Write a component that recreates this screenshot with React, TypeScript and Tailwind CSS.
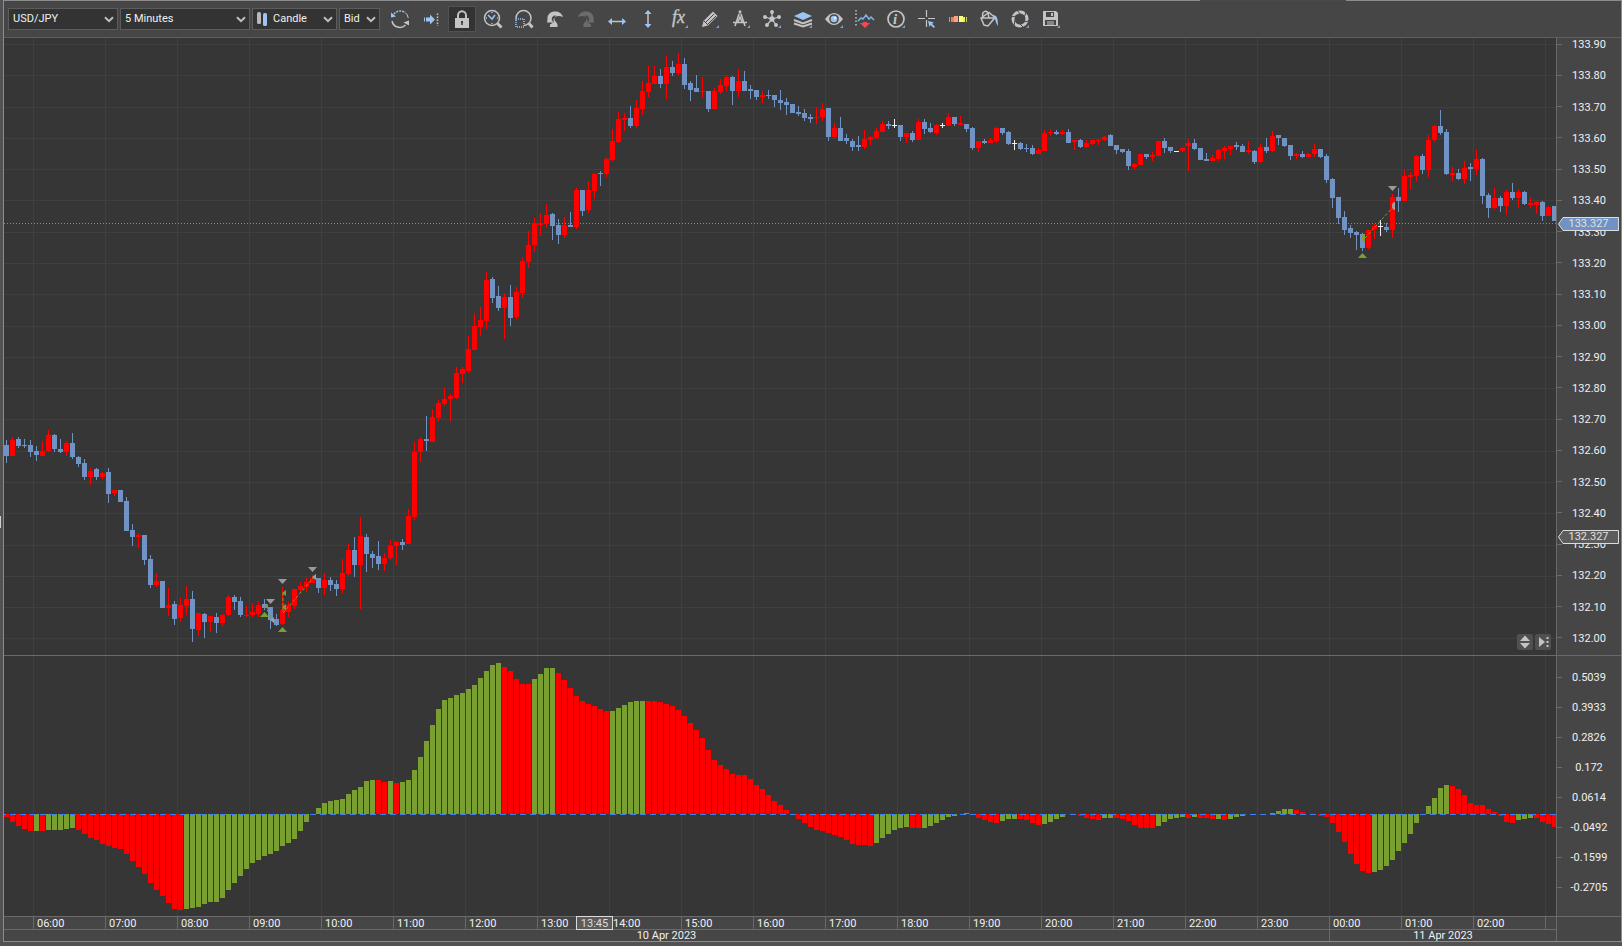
import { ReactNode } from "react";

// Plot geometry: one candle every 6 units, one grid column per hour
const PLOT = { left: 4, width: 1552, top: 38, height: 617 };
const OSC = { top: 656, height: 260, zero: 814 };
const STEP = 6;

const COLORS: Record<string, string> = {
  r: "#ff0000",
  b: "#7093c3",
  w: "#f0f0f0",
  g: "#7a9f31",
};

// colour + high/bodyTop/bodyBottom/low
const CANDLES = `
b440/445/456/463 r437/440/456/456 b437/439/446/448 b439/445/446/448 b440/445/452/457 b446/451/455/461
r441/451/456/456 r430/435/451/452 b434/435/449/452 b439/449/452/453 r441/443/452/456 b433/443/457/459
b456/457/464/467 b459/463/477/480 r468/471/477/485 b468/469/477/480 r472/473/477/479 b468/472/494/503
r490/490/493/496 b490/490/502/502 b497/501/531/531 b524/530/537/546 r533/535/537/548 b535/535/560/565
b555/559/585/588 r573/581/585/587 b581/581/608/608 r588/605/608/616 b601/604/619/625 r598/605/618/622
r586/599/606/615 b591/599/629/642 r613/613/630/636 b613/614/622/638 r616/616/622/632 b613/617/623/633
r614/615/623/626 r595/597/615/616 b595/597/602/610 b597/601/615/617 r606/615/616/617 r603/612/615/617
r601/605/614/617 b599/604/608/610 b607/607/620/629 b614/619/625/626 r587/610/624/625 r602/605/612/617
r589/589/606/609 r582/586/590/593 r578/582/587/592 r575/578/583/583 b578/578/588/593 r573/580/588/595
b577/580/585/591 b580/584/589/596 r559/573/589/593 r544/550/574/576 b537/550/565/577 r517/536/565/609
b534/537/554/572 b551/554/558/568 b541/556/564/570 r553/558/564/571 r540/546/558/560 r541/542/546/565
b539/542/545/550 r509/516/544/544 r442/452/517/520 r437/439/452/462 b416/439/441/451 r409/417/442/442
r400/403/418/422 r388/399/404/406 r394/396/399/422 r367/373/398/399 r367/369/374/383 r336/349/371/373
r313/326/350/350 r307/320/327/336 r272/280/321/329 b277/279/298/303 b286/296/308/311 r294/297/308/339
b285/297/318/326 r287/292/317/319 r257/261/293/298 r231/245/262/268 r218/223/245/252 r213/223/225/236
r204/215/224/228 b213/214/226/240 b219/225/235/244 r217/225/235/238 b212/225/227/227 r188/190/227/229
b190/190/211/216 r181/190/210/213 r173/174/191/199 b171/173/174/186 r157/159/174/177 r129/141/160/161
r112/119/142/143 r113/118/120/131 b106/118/126/128 r100/108/126/128 r81/91/109/115 r66/83/92/97
r66/76/84/84 b69/76/84/88 r56/67/84/99 b61/67/73/76 r53/64/73/75 b58/64/85/89
b81/83/90/101 b75/88/92/92 r77/91/92/98 b91/91/109/112 r88/91/109/109 r79/85/92/94
r75/77/86/91 b76/77/91/105 r69/81/91/97 b71/81/91/91 b85/89/91/99 b90/90/97/100
r91/95/97/103 b90/95/96/99 b95/95/100/107 b90/100/103/110 b98/102/105/115 b104/104/113/113
b106/112/114/116 b109/113/118/121 b114/117/119/123 r108/117/118/124 r103/109/117/121 b108/108/137/141
r123/128/137/138 b117/128/141/141 b134/138/141/144 b139/141/147/151 b136/145/147/151 r130/139/147/149
r136/137/140/145 r128/131/138/139 r121/124/132/132 b121/124/126/129 w119/125/126/128 b125/125/137/141
r133/133/137/143 b131/133/140/142 r119/122/140/140 b119/122/129/134 b123/128/132/133 r124/125/133/135
w123/125/126/128 r113/117/126/126 b117/117/124/126 r116/123/125/126 b124/124/129/132 b127/128/148/150
r141/141/148/152 b139/141/143/144 r138/140/143/143 r127/128/141/143 b128/128/133/135 b131/132/144/145
w140/143/144/150 b142/143/149/150 b144/148/149/152 b145/148/154/155 r148/150/154/154 r130/133/151/151
r129/132/133/136 b130/132/134/135 r130/132/134/135 b129/132/143/143 r140/140/142/150 b139/140/147/148
r140/143/147/148 r140/140/144/145 r139/140/141/145 r136/137/140/141 b134/135/146/146 b145/145/150/154
b149/149/152/153 b149/151/166/170 r163/164/167/169 r154/154/165/165 b154/154/157/159 r152/155/157/161
r141/141/156/156 b138/141/148/153 b147/147/151/153 w151/151/152/152 r147/148/151/152 r139/143/146/171
b139/143/149/150 b148/148/160/160 b153/159/161/161 r155/158/161/161 r149/150/159/161 r146/148/151/159
r146/146/149/155 b142/145/147/150 b144/146/152/152 r141/150/152/154 b150/151/162/164 r144/147/162/163
b138/147/151/153 r131/136/151/152 b135/135/138/145 b138/138/146/147 b145/145/156/160 r153/154/156/159
b151/154/157/158 r153/154/157/158 r144/149/154/157 b149/149/157/158 b154/156/180/183 b178/179/198/208
b197/197/218/224 b211/217/230/235 b225/228/233/238 b231/232/235/250 b233/234/248/251 r230/230/248/249
r224/226/229/239 w220/226/227/236 b223/227/230/232 r194/197/230/238 b188/197/201/212 r170/176/201/201
r172/175/177/189 r155/156/176/181 b154/156/170/174 r135/140/170/177 r125/126/140/142 b110/126/133/135
b129/132/174/175 r167/173/175/181 b169/173/179/180 r161/168/179/184 b163/167/169/181 r150/159/169/175
b158/159/196/204 b193/195/208/218 r188/198/208/209 b196/198/206/212 r190/192/206/215 b183/192/198/200
r189/192/198/208 b191/192/204/205 r197/203/205/208 r201/202/205/214 b201/202/216/221 r206/207/216/216
b206/206/221/221`
  .trim()
  .split(/\s+/)
  .map((c) => ({ color: COLORS[c[0]], v: c.slice(1).split("/").map(Number) }));

// Oscillator bars as runs of one colour, heights above or below zero
const RUNS: [string, number[]][] = [
  ["r", [-3, -8, -12, -15, -17]],
  ["g", [-17]],
  ["r", [-17]],
  ["g", [-16, -16, -16, -15, -14]],
  ["r", [-16, -20, -24, -26, -30, -32, -34, -35, -40, -47, -53, -60, -69, -76, -82, -89, -95, -96]],
  ["g", [-95, -94, -93, -90, -88, -88, -84, -76, -69, -62, -55, -49, -46, -42, -40, -37, -32, -29, -25, -17, -8, 0]],
  ["g", [6, 11, 13, 14, 15, 20, 24, 27, 33, 34]],
  ["r", [34, 32]],
  ["g", [33]],
  ["r", [31]],
  ["g", [32, 34, 44, 57, 73, 89, 105, 114, 116, 119, 121, 125, 129, 136, 143, 149, 151]],
  ["r", [147, 143, 135, 130, 130]],
  ["g", [135, 140, 146, 146]],
  ["r", [141, 134, 126, 118, 113, 110, 108, 105, 103]],
  ["g", [103, 106, 109, 112, 113, 113]],
  ["r", [113, 113, 112, 110, 108, 104, 98, 91, 84, 76, 64, 54, 49, 45, 40, 39, 39, 35, 29, 25, 19, 13, 9, 4, 0]],
  ["r", [-5, -9, -13, -16, -17, -19, -21, -23, -26, -30, -31, -31, -32]],
  ["g", [-29, -24, -20, -16, -14, -13]],
  ["r", [-14, -14]],
  ["g", [-14, -12, -9, -6, -3, -2, 0, 1, 0]],
  ["r", [-4, -6, -8, -9]],
  ["g", [-7, -5, -5]],
  ["r", [-5, -6, -9, -11]],
  ["g", [-10, -8, -5, -3, 0, 0]],
  ["r", [-2, -4, -5, -6]],
  ["g", [-4, -4]],
  ["r", [-4, -5, -7, -11, -14, -14, -14]],
  ["g", [-12, -8, -5, -4, -3]],
  ["r", [-4]],
  ["g", [-3]],
  ["r", [-4, -4, -5]],
  ["g", [-5]],
  ["r", [-6]],
  ["g", [-5, -3, -2, 0, 0, 0, 0, 1, 3, 5, 5]],
  ["r", [4, 2, 0, 0, -2, -3, -9, -18, -28, -40, -50, -57, -59]],
  ["g", [-58, -56, -52, -46, -37, -29, -20, -9, 0, 8, 16, 26, 29]],
  ["r", [28, 25, 19, 11, 9, 9, 5, 2, -2, -8, -9]],
  ["g", [-6, -5, -4]],
  ["r", [-4, -8, -10, -13]],
];
const BARS = RUNS.flatMap(([c, values]) => values.map((v) => ({ color: COLORS[c], v })));

const HOUR_LINES = Array.from({ length: 22 }, (_, i) => 33 + 72 * i);
const PRICE_LINES = Array.from({ length: 20 }, (_, i) => Math.floor(638.9 - 31.28 * i));
const PRICES = Array.from({ length: 20 }, (_, i) => (133.9 - i / 10).toFixed(2));
const LEVELS = ["0.5039", "0.3933", "0.2826", "0.172", "0.0614", "-0.0492", "-0.1599", "-0.2705"];
const HOURS = Array.from({ length: 21 }, (_, i) => `${String((i + 6) % 24).padStart(2, "0")}:00`);

const GREY = "#c4c4c4";
const BLUE = "#9cc4f5";

function Picker({ label, value, width, icon }: { label: string; value: string; width: string; icon?: ReactNode }) {
  return (
    <label className={`relative flex h-[22px] items-center border border-[#5c5c5c] bg-[#333333] ${width}`}>
      {icon}
      <select
        aria-label={label}
        className={`h-full w-full appearance-none bg-transparent text-[11px] text-[#f0f0f0] outline-none ${icon ? "pl-[6px]" : "pl-1"}`}
      >
        <option>{value}</option>
      </select>
      <svg className="pointer-events-none absolute right-[3px] h-[7px] w-[10px]" viewBox="0 0 10 7">
        <path d="M1 1.2l4 4 4-4" fill="none" stroke="#c0c0c0" strokeWidth="2" />
      </svg>
    </label>
  );
}

const more = <path d="M9 6V9H6z" fill="#6f9fe0" stroke="none" />;

const TOOLS: { name: string; icon: ReactNode }[] = [
  {
    name: "Refresh",
    icon: (
      <g fill="none" stroke={GREY} strokeWidth="1.5">
        <path d="M-6-5A8 8 0 0 1 5-6.5" stroke={BLUE} strokeDasharray="2 1" />
        <path d="M5-6.5A8.3 8.3 0 0 1 8.3-1" strokeWidth="1" />
        <path d="M-8 2A8 8 0 0 0 5.5 6" />
        <path d="M-9-6.5V-1.5L-4-2.5z" fill={BLUE} stroke="none" />
        <path d="M9 1.5V6.5L3.5 3.5z" fill={GREY} stroke="none" />
      </g>
    ),
  },
  {
    name: "Shift chart",
    icon: (
      <g fill={BLUE}>
        <path d="M-7-1.5h1v4h-1zM-5-1.5h4v-3l5 5-5 5v-3h-4z" />
        <path d="M6.5-5.5V7" stroke={GREY} strokeWidth="1.5" strokeDasharray="1.5 1.5" />
      </g>
    ),
  },
  {
    name: "Lock",
    icon: (
      <g>
        <path d="M-4 0v-3.5a4 4.2 0 0 1 8 0V0" fill="none" stroke={GREY} strokeWidth="2" />
        <rect x="-7" y="-1" width="14" height="10" fill={GREY} />
        <path d="M0 2v4M-1 3h2" stroke="#333" strokeWidth="1.5" />
      </g>
    ),
  },
  {
    name: "Zoom time",
    icon: (
      <g fill="none" stroke={GREY} strokeWidth="1.5">
        <circle cx="-1" cy="-1" r="7.5" />
        <path d="M4.5 4.5L8.5 8.5" strokeWidth="3" />
        <path d="M-5-4l4 4 3-4" stroke={BLUE} />
        <path d="M-1-7v1M-7-1h1M4-1h1M-1 4v1" stroke={BLUE} />
      </g>
    ),
  },
  {
    name: "Zoom area",
    icon: (
      <g fill="none" stroke={GREY} strokeWidth="1.5">
        <circle cx="-.5" cy="-1" r="7.5" />
        <path d="M5 4.5L8.5 8.5" strokeWidth="3" />
        <rect x="-8" y="0" width="8" height="8" fill="#464646" stroke={BLUE} strokeDasharray="1 1" />
      </g>
    ),
  },
  {
    name: "Undo",
    icon: (
      <path
        d="M8-2C7-6 3-8-1-7.5-5-7-8-4-7.500 0L-8 3.500-1 3.500-3 1.500C-4-2-1-4 1-3.500-1-2-1 0 0 2 2 4 3 5 2.500 8H-5V5.500L-1 3C-3-1 1-5 8-2z"
        fill={GREY}
      />
    ),
  },
  {
    name: "Redo",
    icon: (
      <path
        d="M-8-2C-7-6-3-8 1-7.5 5-7 8-4 7.500 0L8 3.500 1 3.500 3 1.500C4-2 1-4-1-3.500 1-2 1 0 0 2-2 4-3 5-2.500 8H5V5.500L1 3C3-1-1-5-8-2z"
        fill="#6c6c6c"
      />
    ),
  },
  {
    name: "Horizontal scale",
    icon: (
      <g fill={BLUE}>
        <path d="M-5 2.5h10" stroke={GREY} strokeWidth="1.5" />
        <path d="M-9 2.5l4-3.5v7zM9 2.5l-4-3.5v7z" />
      </g>
    ),
  },
  {
    name: "Vertical scale",
    icon: (
      <g fill={BLUE}>
        <path d="M0-5V5" stroke={GREY} strokeWidth="1.5" />
        <path d="M0-9l3.5 4h-7zM0 9l3.5-4h-7z" />
      </g>
    ),
  },
  {
    name: "Indicators",
    icon: (
      <g>
        <text x="-7" y="4" fontFamily="Liberation Serif, serif" fontStyle="italic" fontSize="18" fill={GREY} stroke={GREY} strokeWidth=".4">
          fx
        </text>
        {more}
      </g>
    ),
  },
  {
    name: "Drawings",
    icon: (
      <g>
        <path d="M-8 8l1.500-6L3-7.5 7.5-3-2 6.5z" fill={GREY} />
        <path d="M-4 3L4-5M-2 5l8-8M-6 2l4 4" stroke="#464646" />
        {more}
      </g>
    ),
  },
  {
    name: "Geometry",
    icon: (
      <g fill="none" stroke={GREY} strokeWidth="1.5">
        <path d="M-6 7L-2-5M4 7L0-5M-8 3.5h14M-3 3L-1-2 1 3" />
        <path d="M-1-8.500v3" strokeWidth="2.500" />
        {more}
      </g>
    ),
  },
  {
    name: "Patterns",
    icon: (
      <g fill="#b9cbe0" stroke={GREY} strokeWidth="1.3">
        <path d="M0-7V0M-7-2l7 2 7-2M-5 6l5-6 4 6" fill="none" />
        <circle cx="0" cy="-7" r="1.3" />
        <circle cx="-7" cy="-2" r="1.3" />
        <circle cx="7" cy="-2" r="1.3" />
        <circle cx="-5" cy="6" r="1.3" />
        <circle cx="4" cy="6" r="1.3" />
        <circle cx="0" cy="0" r="2" />
        {more}
      </g>
    ),
  },
  {
    name: "Layers",
    icon: (
      <g>
        <path d="M0-7l9 4-9 4-9-4z" fill={BLUE} />
        <path d="M-9 1l9 3.5L9 1M-9 4.5l9 3 9-3" fill="none" stroke={GREY} strokeWidth="2" />
        {more}
      </g>
    ),
  },
  {
    name: "Visibility",
    icon: (
      <g>
        <path d="M-9 0Q0-12 9 0 0 12-9 0z" fill={GREY} />
        <circle r="4.8" fill="#464646" />
        <circle r="3.3" fill={BLUE} />
        <circle cx="1" cy="-1" r="1" fill="#fff" />
        {more}
      </g>
    ),
  },
  {
    name: "Trades",
    icon: (
      <g>
        <path d="M-9-9V8" stroke={GREY} strokeWidth="1.5" strokeDasharray="1.5 2" />
        <path d="M-7 2l3-3 2 1 3-4 3 4 2-2 3 3" fill="none" stroke="#7fb0ee" strokeWidth="1.5" />
        <path d="M-5 4h3V3h4v1h3L0 9z" fill="#f04858" />
      </g>
    ),
  },
  {
    name: "Info",
    icon: (
      <g>
        <circle r="8" fill="none" stroke={GREY} strokeWidth="1.7" />
        <text x="-3" y="5" fontFamily="Liberation Serif, serif" fontStyle="italic" fontWeight="bold" fontSize="15" fill={GREY}>
          i
        </text>
        {more}
      </g>
    ),
  },
  {
    name: "Crosshair",
    icon: (
      <g>
        <path d="M-.5-9v7M-.5 1v7M-9-.5h7M1-.5h7" stroke={GREY} strokeWidth="1.2" />
        <path d="M1 2l6 1.500-2 1.200 3 3L6.700 9l-3-3L2.500 8z" fill={BLUE} />
      </g>
    ),
  },
  {
    name: "Colours",
    icon: (
      <g>
        <path d="M-9-2h1v5h-1z" fill="#f09030" />
        <path d="M-7-2h3v5h-3z" fill="#f47a50" />
        <path d="M-4-3h4v6h-4z" fill="#ff9e80" />
        <path d="M1-3h4v6H1z" fill="#f6ff80" />
        <path d="M5-2h2v5H5z" fill="#dff060" />
        <path d="M8-2h1v5H8z" fill="#d8c840" />
      </g>
    ),
  },
  {
    name: "Fill",
    icon: (
      <g fill="none" stroke={GREY} strokeWidth="1.5">
        <path d="M-8-1L0-6.5l6 5L-1 7-5 6zM-8-1H5" />
        <path d="M-6-2c-2-6 4-7 5-4l1 5" />
        <path d="M3-4c5 0 6 3 6 11C6 3 7-1 3-4z" fill={BLUE} stroke="none" />
      </g>
    ),
  },
  {
    name: "Snapshot",
    icon: (
      <g fill="none" stroke={GREY}>
        <circle r="7" strokeWidth="3" />
        <path d="M-3-9l4 5M6-7L4-1M9 2L3 3M3 8L-1 4M-6 7l1-6M-9-2l5-1" stroke="#464646" />
        {more}
      </g>
    ),
  },
  {
    name: "Save",
    icon: (
      <g>
        <path d="M-8-8H5l2 2V7H-8z" fill={GREY} />
        <path d="M-5-7h8v5h-8zM-6 1H5v5H-6z" fill="#464646" />
        <path d="M0-6h2v3H0z" fill={GREY} />
        <path d="M-4 3h7M-4 5h7" stroke={GREY} />
        {more}
      </g>
    ),
  },
];

function Toolbar() {
  return (
    <div className="flex h-9 items-center bg-[#464646] pl-1">
      <div className="flex shrink-0 gap-0.5">
        <Picker label="Instrument" value="USD/JPY" width="w-[110px]" />
        <Picker label="Period" value="5 Minutes" width="w-[130px]" />
        <Picker
          label="Chart type"
          value="Candle"
          width="w-[85px]"
          icon={
            <svg className="ml-1 h-[14px] w-[10px] shrink-0" viewBox="0 0 10 14">
              <rect x="0" y="0" width="4" height="12" rx="1.5" fill="#b8b8b8" />
              <rect x="6" y="1" width="4" height="13" rx="1.5" fill={BLUE} />
            </svg>
          }
        />
        <Picker label="Price side" value="Bid" width="w-[41px]" />
      </div>
      <div className="ml-[6px] flex gap-[3px]">
        {TOOLS.map(({ name, icon }) => (
          <button
            key={name}
            aria-label={name}
            className={`h-[26px] w-7 shrink-0 border ${name === "Lock" ? "border-[#525252] bg-[#333333]" : "border-transparent"}`}
          >
            <svg className="-m-px h-[26px] w-7" viewBox="-14 -13 28 26">
              {icon}
            </svg>
          </button>
        ))}
      </div>
    </div>
  );
}

function HourGrid({ top, height }: { top: number; height: number }) {
  return (
    <>
      {HOUR_LINES.map((x) => (
        <rect key={x} x={x} y={top} width="1" height={height} fill="#3f3f3f" />
      ))}
    </>
  );
}

const up = (x: number, y: number) => `M${x - 4} ${y + 5}h9l-4.5-5z`;
const down = (x: number, y: number) => `M${x - 4} ${y}h9l-4.5 5z`;

function PriceChart() {
  return (
    <svg
      className="min-w-0 flex-1"
      viewBox={`${PLOT.left} ${PLOT.top} ${PLOT.width} ${PLOT.height}`}
      preserveAspectRatio="none"
      role="img"
      aria-label="USD/JPY price chart"
    >
      <g shapeRendering="crispEdges">
        <HourGrid top={PLOT.top} height={PLOT.height} />
        {PRICE_LINES.map((y) => (
          <rect key={y} x={PLOT.left} y={y} width={PLOT.width} height="1" fill="#3f3f3f" />
        ))}
        <path d="M4 223.5H1556" stroke="#8a8a8a" strokeDasharray="1 2" />
        {CANDLES.map(({ color, v: [high, top, bottom, low] }, i) => (
          <g key={i} fill={color}>
            <rect x={PLOT.left + i * STEP + 2} y={high} width="1" height={low - high} />
            <rect x={PLOT.left + i * STEP} y={top} width="5" height={bottom - top} />
          </g>
        ))}
      </g>
      {/* trades: entry, exit and the line between them */}
      <path
        d="M283 613L314 577M283 611V591M265 605L272 620M1365 238L1394 206"
        fill="none"
        stroke={COLORS.g}
        strokeDasharray="3 2"
      />
      <path d={[up(264, 612), up(282, 627), up(1362, 253)].join("")} fill={COLORS.g} />
      <path d={[down(270, 599), down(282, 579), down(312, 567), down(1392, 186)].join("")} fill="#9a9a9a" />
      <path d="M286 590v6l-4-3zM286 604v7l-4-4zM268 604v5l-4-3zM1365 234v8a3 4 0 0 1 0-8z" fill={COLORS.g} />
      <path d="M274 617v6l-4-3zM316 574v6l-4-3zM1395 202v8a3 4 0 0 1 0-8z" fill="#a0a0a0" />
    </svg>
  );
}

function Oscillator() {
  return (
    <svg
      className="min-w-0 flex-1"
      viewBox={`${PLOT.left} ${OSC.top} ${PLOT.width} ${OSC.height}`}
      preserveAspectRatio="none"
      shapeRendering="crispEdges"
      role="img"
      aria-label="Oscillator"
    >
      <HourGrid top={OSC.top} height={OSC.height} />
      {BARS.map(({ color, v }, i) => (
        <rect
          key={i}
          x={PLOT.left + i * STEP}
          y={v > 0 ? OSC.zero - v : OSC.zero}
          width="5"
          height={Math.abs(v)}
          fill={color}
        />
      ))}
      <path d="M0 814.5H1556" stroke="#3b7ff0" strokeDasharray="6 4" />
    </svg>
  );
}

function Scale({ labels }: { labels: string[] }) {
  return (
    <>
      {labels.map((label) => (
        <div key={label} className="flex h-3 items-center leading-3">
          <span className="h-px w-[5px] bg-[#6a6a6a]" />
          <span className="flex-1 pr-[5px] pt-0.5 text-center">{label}</span>
        </div>
      ))}
    </>
  );
}

function PriceTag({ value, y, fill }: { value: string; y: number; fill: string }) {
  return (
    <div
      className="absolute left-px flex h-[14px] w-[61px] items-center justify-center leading-3 text-[#e0e0e0]"
      style={{ top: `${((y - PLOT.top) / PLOT.height) * 100}%` }}
    >
      <svg className="absolute inset-0 h-full w-full" viewBox="0 0 61 14">
        <path d="M.5 7L5 .5h55.500v13H5z" fill={fill} stroke="#dcdcdc" />
      </svg>
      <span className="relative">{value}</span>
    </div>
  );
}

export default function App() {
  return (
    <div className="relative flex h-screen flex-col bg-[#525252] pb-1 pl-[3px] font-[Roboto,sans-serif] text-[11px] text-[#f0f0f0]">
      <div className="absolute left-0 top-[516px] h-3 w-px bg-[#d0d0d0]" />
      <div className="absolute left-[74%] top-0 h-px w-[9%] bg-[#4a4a4a]" />
      <main className="flex min-h-0 flex-1 flex-col border border-[#8c8c8c] bg-[#363636]">
        <Toolbar />

        <section className="flex min-h-0 flex-[617] border-t border-[#5e5e5e]">
          <div className="relative flex min-w-0 flex-1">
            <PriceChart />
            <div className="absolute bottom-[5px] right-[5px] flex gap-0.5">
              <button aria-label="Fit vertically" className="h-4 w-4 rounded-xs bg-[#505050]">
                <svg className="h-4 w-4" viewBox="0 0 16 16">
                  <path d="M8 1.5l5 5.5H3zM8 14.5L3 9h10z" fill={GREY} />
                </svg>
              </button>
              <button aria-label="Go to latest" className="h-4 w-4 rounded-xs bg-[#505050]">
                <svg className="h-4 w-4" viewBox="0 0 16 16">
                  <path d="M4 3l6 5-6 5z" fill={GREY} />
                  <path d="M12.5 3v11" stroke={GREY} strokeWidth="2" strokeDasharray="2 2" />
                </svg>
              </button>
            </div>
          </div>
          <div className="relative flex w-[65px] flex-col justify-between border-l border-[#6a6a6a] bg-[#464646] pb-[11px]">
            <Scale labels={PRICES} />
            <PriceTag value="133.327" y={217} fill="#7093c3" />
            <PriceTag value="132.327" y={530} fill="#5c5c5c" />
          </div>
        </section>

        <section className="flex min-h-0 flex-[260] border-t border-[#6a6a6a]">
          <Oscillator />
          <div className="flex w-[65px] flex-col justify-between border-l border-[#6a6a6a] bg-[#464646] pb-[23px] pt-[15px]">
            <Scale labels={LEVELS} />
          </div>
        </section>

        <footer className="flex border-t border-[#6a6a6a] bg-[#464646]">
          <div className="min-w-0 flex-1">
            <div className="relative grid h-3 grid-cols-[29fr_repeat(21,72fr)_11fr] leading-[13px]">
              <span />
              {HOURS.map((hour) => (
                <span key={hour} className="h-3 min-w-0 border-l border-[#6a6a6a] pl-[3px]">
                  {hour}
                </span>
              ))}
              <span className="h-3 border-l border-[#6a6a6a]" />
              <span
                className="absolute -top-px flex h-[14px] w-[37px] items-center justify-center border border-[#dcdcdc] bg-[#5c5c5c] text-[#dcdcdc]"
                style={{ left: `${(572 / PLOT.width) * 100}%` }}
              >
                13:45
              </span>
            </div>
            <div className="grid h-3 grid-cols-[1325fr_227fr] border-t border-[#6a6a6a] text-center leading-[11px]">
              <span>10 Apr 2023</span>
              <span className="border-l border-[#6a6a6a]">11 Apr 2023</span>
            </div>
          </div>
          <div className="w-[65px] border-l border-[#6a6a6a]" />
        </footer>
      </main>
    </div>
  );
}
